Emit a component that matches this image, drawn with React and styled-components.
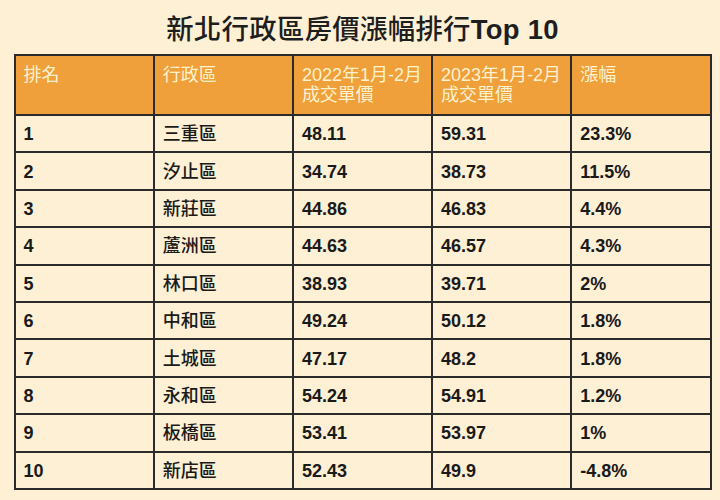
import React from "react";
import styled, { createGlobalStyle } from "styled-components";

const Global = createGlobalStyle`
  html, body { margin: 0; padding: 0; background: #fdf0d5; }
  body { font-family: "Liberation Sans", "Noto Sans CJK TC", sans-serif; }
`;

const Page = styled.div`
  width: 720px;
  height: 500px;
  background: #fdf0d5;
  display: flex;
  flex-direction: column;
  align-items: center;
  padding: 12px 0 0 5px;
  box-sizing: border-box;
`;

const Title = styled.h1`
  margin: 0 0 6px 0;
  font-family: "Liberation Sans", "Noto Sans CJK TC", sans-serif;
  font-size: 27.4px;
  line-height: 36px;
  font-weight: 500;
  color: #1e1e1e;
  letter-spacing: 0.3px;
`;

const TitleLatin = styled.span`
  font-weight: 700;
`;

const Table = styled.table`
  width: 698px;
  border-collapse: collapse;
  table-layout: fixed;
  border: 2px solid #2b2b2b;
`;

const HeadRow = styled.tr`
  height: 60px;
`;

const BodyRow = styled.tr`
  height: 37.4px;
`;

const HeadCell = styled.th`
  box-sizing: border-box;
  background: #f0a03a;
  color: #fff2cf;
  font-weight: 400;
  font-size: 18px;
  line-height: 20px;
  text-align: left;
  vertical-align: top;
  white-space: nowrap;
  padding: 9px 6px 0 8px;
  border: 2px solid #2b2b2b;
`;

const Cell = styled.td`
  box-sizing: border-box;
  font-size: 18px;
  font-weight: ${(p) => (p.$cjk ? 500 : 700)};
  color: #1a1a1a;
  padding: 1px 8px 0 8px;
  border: 2px solid #2b2b2b;
  line-height: 20px;
  white-space: nowrap;
`;

const rows = [
  ["1", "三重區", "48.11", "59.31", "23.3%"],
  ["2", "汐止區", "34.74", "38.73", "11.5%"],
  ["3", "新莊區", "44.86", "46.83", "4.4%"],
  ["4", "蘆洲區", "44.63", "46.57", "4.3%"],
  ["5", "林口區", "38.93", "39.71", "2%"],
  ["6", "中和區", "49.24", "50.12", "1.8%"],
  ["7", "土城區", "47.17", "48.2", "1.8%"],
  ["8", "永和區", "54.24", "54.91", "1.2%"],
  ["9", "板橋區", "53.41", "53.97", "1%"],
  ["10", "新店區", "52.43", "49.9", "-4.8%"],
];

export default function App() {
  return (
    <>
      <Global />
      <Page>
        <Title>
          新北行政區房價漲幅排行<TitleLatin>Top 10</TitleLatin>
        </Title>
        <Table>
          <thead>
            <HeadRow>
              <HeadCell>排名</HeadCell>
              <HeadCell>行政區</HeadCell>
              <HeadCell>
                2022年1月-2月
                <br />
                成交單價
              </HeadCell>
              <HeadCell>
                2023年1月-2月
                <br />
                成交單價
              </HeadCell>
              <HeadCell>漲幅</HeadCell>
            </HeadRow>
          </thead>
          <tbody>
            {rows.map((r) => (
              <BodyRow key={r[0]}>
                <Cell>{r[0]}</Cell>
                <Cell $cjk>{r[1]}</Cell>
                <Cell>{r[2]}</Cell>
                <Cell>{r[3]}</Cell>
                <Cell>{r[4]}</Cell>
              </BodyRow>
            ))}
          </tbody>
        </Table>
      </Page>
    </>
  );
}
